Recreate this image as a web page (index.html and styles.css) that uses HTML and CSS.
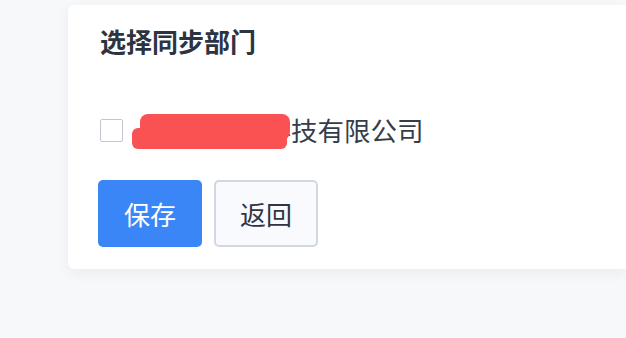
FILE: index.html
```html
<!DOCTYPE html>
<html lang="zh">
<head>
<meta charset="utf-8">
<link rel="stylesheet" href="styles.css">
</head>
<body>
<div class="page">
  <div class="card">
    <h2 class="title">选择同步部门</h2>
    <label class="row">
      <span class="checkbox"></span>
      <span class="name"><span class="hidden-part">某某某某某</span>科技有限公司</span>
      <span class="redact redact-a"></span>
      <span class="redact redact-b"></span>
    </label>
    <div class="actions">
      <button class="btn btn-primary">保存</button>
      <button class="btn btn-default">返回</button>
    </div>
  </div>
</div>
</body>
</html>
```
FILE: styles.css
```css
html, body {
  margin: 0;
  padding: 0;
  background: #f7f8fa;
  overflow: hidden;
  width: 626px;
  height: 338px;
  font-family: "Noto Sans CJK SC", "Noto Sans", sans-serif;
}
.page {
  padding: 5px 0 0 68px;
}
.card {
  width: 558px;
  background: #ffffff;
  border-radius: 6px 0 0 6px;
  box-shadow: 0 4px 14px rgba(30, 40, 70, 0.06);
  padding: 18px 30px 22px;
  box-sizing: border-box;
}
.title {
  margin: 0;
  font-size: 26px;
  line-height: 36px;
  font-weight: 700;
  color: #2c3441;
  padding-left: 2px;
}
.row {
  position: relative;
  display: flex;
  align-items: center;
  height: 36px;
  margin-top: 53px;
  padding-left: 2px;
}
.checkbox {
  width: 21px;
  height: 21px;
  border: 1.5px solid #c1c6d2;
  border-radius: 2px;
  background: #fff;
  flex: none;
}
.name {
  margin-left: 9px;
  font-size: 26.5px;
  line-height: 36px;
  color: #363d4a;
  white-space: nowrap;
}
.hidden-part {
  color: transparent;
}
.redact {
  position: absolute;
  background: #fa5252;
}
.redact-a {
  left: 42px;
  top: 2px;
  width: 150px;
  height: 26px;
  border-radius: 8px;
}
.redact-b {
  left: 34px;
  top: 16px;
  width: 155px;
  height: 21px;
  border-radius: 6px;
}
.actions {
  display: flex;
  gap: 12px;
  margin-top: 32px;
}
.btn {
  width: 104px;
  height: 67px;
  border-radius: 5px;
  font-family: "Noto Sans CJK SC", "Noto Sans", sans-serif;
  font-size: 26px;
  cursor: pointer;
  box-sizing: border-box;
}
.btn-primary {
  background: #3b86f7;
  border: none;
  color: #ffffff;
}
.btn-default {
  background: #f8fafd;
  border: 2px solid #d3d7e2;
  color: #2f3642;
}
```
